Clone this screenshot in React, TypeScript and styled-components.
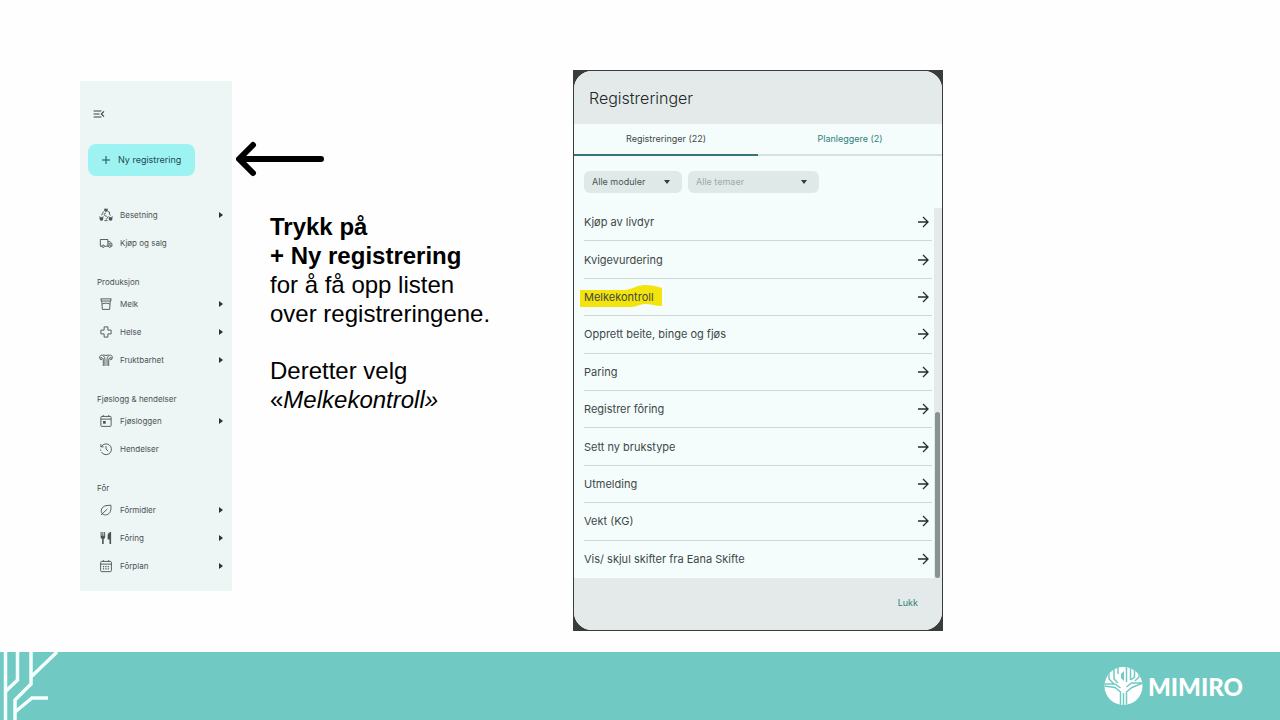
import React from "react";
import styled, { createGlobalStyle } from "styled-components";

const GlobalStyle = createGlobalStyle`
  *, *::before, *::after { box-sizing: border-box; }
  body { margin: 0; background: #fefefe; color: #000; }
  button, select { font: inherit; color: inherit; border: 0; background: none; padding: 0; margin: 0; }
  button { cursor: pointer; }
  svg { display: block; flex: none; }
`;

const Page = styled.div`
  min-height: 100vh;
  display: flex;
  flex-direction: column;
`;

const Slide = styled.main`
  flex: 1;
  display: grid;
  grid-template-columns: minmax(152px, 152fr) minmax(290px, 341fr) minmax(320px, 370fr) minmax(0, 257fr);
  align-items: start;
  padding: 70px 80px 20px;
`;

const Sidebar = styled.nav`
  margin-top: 11px;
  padding: 27px 8px 11px;
  background: #eef5f5;
  color: #4b5253;
  font: 8px/16px Inter, sans-serif;
`;

const MenuButton = styled.button`
  display: block;
  margin: 0 0 24px 5px;
  color: #3c4344;
`;

const NewButton = styled.button`
  display: flex;
  align-items: center;
  gap: 6px;
  min-width: 107px;
  height: 32px;
  padding: 0 12px;
  margin-bottom: 25px;
  border-radius: 8px;
  background: #9cf3f2;
  color: #1f4b4d;
  font-size: 9px;
  white-space: nowrap;
`;

const Group = styled.section`
  & + & { margin-top: 17px; }
`;

const GroupTitle = styled.h2`
  margin: 0;
  padding-left: 9px;
  font-size: 8px;
  font-weight: 400;
  line-height: 16px;
`;

const NavItem = styled.a`
  display: flex;
  align-items: center;
  gap: 7px;
  height: 28px;
  padding: 0 1px 0 11px;
  color: inherit;
  text-decoration: none;
`;

const NavLabel = styled.span`
  flex: 1;
`;

const Instructions = styled.section`
  display: flex;
  flex-direction: column;
  align-items: flex-start;
  padding: 70px 4px 0;
  font: 24px/29px "Liberation Sans", Arial, sans-serif;
`;

const Copy = styled.p`
  margin: 0 0 28px 34px;
  white-space: nowrap;
`;

const ArrowHolder = styled.div`
  margin-bottom: 35px;
`;

const Frame = styled.div`
  padding: 1px;
  background: #3a3c3c;
`;

const Dialog = styled.section`
  overflow: hidden;
  border-radius: 18px;
  background: #f4fdfc;
  color: #3f4747;
  font: 9px/16px Inter, sans-serif;
`;

const DialogHeader = styled.header`
  padding: 15px 15px 14px;
  background: #e3eae9;
`;

const DialogTitle = styled.h1`
  margin: 0;
  color: #222727;
  font-size: 16px;
  font-weight: 300;
  line-height: 24px;
`;

const Tabs = styled.div`
  display: grid;
  grid-template-columns: 1fr 1fr;
`;

const Tab = styled.button<{ $active?: boolean }>`
  height: 32px;
  border-bottom: ${(p) => (p.$active ? "2px solid #3b7474" : "2px solid #d8e1e0")};
  color: ${(p) => (p.$active ? "#3f4747" : "#2b8180")};
`;

const Filters = styled.div`
  display: flex;
  gap: 6px;
  padding: 15px 10px 11px;
`;

const Field = styled.label<{ $wide?: boolean }>`
  position: relative;
  width: ${(p) => (p.$wide ? "131px" : "98px")};

  svg {
    position: absolute;
    top: 9px;
    right: 12px;
    pointer-events: none;
  }
`;

const Picker = styled.select<{ $muted?: boolean }>`
  appearance: none;
  width: 100%;
  height: 22px;
  padding: 0 8px;
  border-radius: 6px;
  background: #dee9e8;
  color: ${(p) => (p.$muted ? "#9eaaaa" : "#4b5454")};
`;

const ScrollArea = styled.div`
  display: flex;
`;

const List = styled.ul`
  flex: 1;
  display: grid;
  grid-auto-rows: 1fr;
  min-height: 374px;
  margin: 0;
  padding: 0 0 0 10px;
  list-style: none;
  font-size: 11px;
`;

const ListItem = styled.li`
  display: flex;
  border-bottom: 1px solid #cfd8d7;

  &:last-child { border-bottom: 0; }
`;

const RowButton = styled.button`
  flex: 1;
  display: flex;
  align-items: center;
  justify-content: space-between;
  padding-right: 3px;
  text-align: left;
`;

const Label = styled.span`
  position: relative;
  z-index: 0;
`;

const Marker = styled.svg`
  position: absolute;
  z-index: -1;
  top: -4px;
  left: -4px;
`;

const ScrollTrack = styled.div`
  display: flex;
  align-items: flex-end;
  width: 8px;
  margin: 4px 0 0 2px;
  padding-left: 1px;
  background: #e3eae9;
`;

const ScrollThumb = styled.div`
  width: 5px;
  height: 45%;
  border-radius: 3px;
  background: #879291;
`;

const DialogFooter = styled.footer`
  display: flex;
  justify-content: flex-end;
  padding: 17px 24px 19px;
  background: #e3eae9;
  color: #2b8176;
`;

const Banner = styled.footer`
  display: flex;
  justify-content: space-between;
  height: 68px;
  background: #70c9c2;
`;

const Brand = styled.div`
  display: flex;
  align-items: center;
  gap: 5px;
  padding-right: 37px;
  color: #fff;
  font: 900 24px/29px Lato, sans-serif;
`;

const stroke = {
  fill: "none",
  stroke: "currentColor",
  strokeWidth: 1.7,
  strokeLinejoin: "round" as const,
};

const icons: Record<string, React.ReactNode> = {
  herd: (
    <g {...stroke}>
      <g fill="currentColor" stroke="none">
        <circle cx="12" cy="3" r="3" />
        <path d="M8 0l3 1-1 2zM16 0l-3 1 1 2z" />
        <circle cx="3.500" cy="19" r="3.500" />
        <path d="M-1 14.500l3.500 1-2 2zM8 14.500l-3.500 1 2 2z" />
        <circle cx="20.500" cy="19" r="3.500" />
        <path d="M16 14.500l3.500 1-2 2zM25 14.500l-3.500 1 2 2z" />
      </g>
      <path d="M8.500 5.500C6 7 4.500 9.500 4 12.500M15 5.500l3.500 1V10l1.500 3M9 22.500h6M12 8.500c-3 0-4.500 2-3 4s4.500 1 5.500 3-.5 4-3 4" />
    </g>
  ),
  truck: (
    <g {...stroke}>
      <path d="M4.500 18H1.500V5.500h14V18H9M15.500 9.500h4l3.500 4V18h-1.500M15.500 18h1" />
      <circle cx="6.700" cy="18" r="2.200" />
      <circle cx="19" cy="18" r="2.200" />
      <path d="M16 13.500h6" />
    </g>
  ),
  milk: <path {...stroke} d="M2 2.500h20M3 2.500v4h18v-4M4.200 6.500l1 15.500h13.600l1-15.500M5 12c4-2 10-2 14 0" />,
  health: <path {...stroke} d="M8.500 2.500h7v6h6v7h-6v6h-7v-6h-6v-7h6z" />,
  fertility: (
    <g {...stroke}>
      <path d="M10 23V10C9.500 6 7 3 4 3 1 3-.5 6 .5 9M14 23V10c.5-4 3-7 6-7 3 0 4.500 3 3.500 6M7 23V11c0-1.500-.5-2.500-1.500-3M17 23V11c0-1.500.5-2.500 1.500-3M7 2.500c2 0 3.500.5 5 1.500 1.500-1 3-1.500 5-1.500" />
      <circle cx="3" cy="9.500" r="2" />
      <circle cx="21" cy="9.500" r="2" />
    </g>
  ),
  day: (
    <g {...stroke}>
      <rect x="2.500" y="3.500" width="19" height="18.500" rx="1.500" />
      <path d="M2.500 8.500h19M7 1v3M17 1v3" />
      <path fill="currentColor" stroke="none" d="M6.500 12h5v5h-5z" />
    </g>
  ),
  history: (
    <g {...stroke}>
      <path d="M3.500 7.500A10 10 0 1 1 5 19.500" />
      <path strokeDasharray="2.500 2" d="M5 19.500A10 10 0 0 1 2 11" />
      <path d="M2.500 3v5H7.500M12 6.500V12l4 4" />
    </g>
  ),
  leaf: (
    <path {...stroke} d="M3 21L14.500 10M5 19C1 14 3.500 5.500 12 4c3-.5 6-.5 9-1 .5 4 .5 8-1 12-2.500 6-10 8-15 4z" />
  ),
  cutlery: (
    <path fill="currentColor" d="M2 1h1.800v7h1.500V1h1.800v7h1.500V1h1.800v9c0 2-1.200 3.300-2.700 3.800V23H4.800v-9.200C3.200 13.300 2 12 2 10zM21.500 1v22H18.500v-8H15V7.500c0-3.500 2.800-6.500 6.500-6.500z" />
  ),
  calendar: (
    <g {...stroke}>
      <rect x="2" y="3.500" width="20" height="19" rx="2" />
      <path d="M2 8.500h20M7 1v3M17 1v3" />
      <path strokeDasharray="2.200 2.200" strokeWidth={2.200} d="M6.300 13h12M6.300 17.500h12" />
    </g>
  ),
};

const Icon = ({ name }: { name: string }) => (
  <svg width="14" height="14" viewBox="-1 -1 26 26" overflow="visible" aria-hidden="true">
    {icons[name]}
  </svg>
);

const CaretRight = () => (
  <svg width="4" height="6" viewBox="0 0 4 6" aria-hidden="true">
    <path d="M0 0l4 3-4 3z" fill="#2c3233" />
  </svg>
);

const CaretDown = () => (
  <svg width="6" height="4" viewBox="0 0 6 4" aria-hidden="true">
    <path d="M0 0h6L3 4z" fill="#343c3c" />
  </svg>
);

const RowArrow = () => (
  <svg width="12" height="12" viewBox="0 0 12 12" aria-hidden="true">
    <path d="M1 6h10M6 1l5 5-5 5" fill="none" stroke="#262b2b" strokeWidth="1.300" />
  </svg>
);

type Entry = { icon: string; label: string; leaf?: boolean };

const groups: { title?: string; items: Entry[] }[] = [
  {
    items: [
      { icon: "herd", label: "Besetning" },
      { icon: "truck", label: "Kjøp og salg", leaf: true },
    ],
  },
  {
    title: "Produksjon",
    items: [
      { icon: "milk", label: "Melk" },
      { icon: "health", label: "Helse" },
      { icon: "fertility", label: "Fruktbarhet" },
    ],
  },
  {
    title: "Fjøslogg & hendelser",
    items: [
      { icon: "day", label: "Fjøsloggen" },
      { icon: "history", label: "Hendelser", leaf: true },
    ],
  },
  {
    title: "Fôr",
    items: [
      { icon: "leaf", label: "Fôrmidler" },
      { icon: "cutlery", label: "Fôring" },
      { icon: "calendar", label: "Fôrplan" },
    ],
  },
];

const registrations = [
  "Kjøp av livdyr",
  "Kvigevurdering",
  "Melkekontroll",
  "Opprett beite, binge og fjøs",
  "Paring",
  "Registrer fôring",
  "Sett ny brukstype",
  "Utmelding",
  "Vekt (KG)",
  "Vis/ skjul skifter fra Eana Skifte",
];

export default function App() {
  return (
    <Page>
      <GlobalStyle />
      <Slide>
        <Sidebar aria-label="Hovedmeny">
          <MenuButton aria-label="Meny">
            <svg width="12" height="12" viewBox="2 2 20 20" fill="currentColor" aria-hidden="true">
              <path d="M3 18h13v-2H3v2zm0-5h10v-2H3v2zm0-7v2h13V6H3zm18 9.590L17.420 12 21 8.410 19.590 7l-5 5 5 5L21 15.590z" />
            </svg>
          </MenuButton>
          <NewButton>
            <svg width="12" height="12" viewBox="0 0 12 12" aria-hidden="true">
              <path d="M6 2v8M2 6h8" stroke="currentColor" />
            </svg>
            Ny registrering
          </NewButton>
          {groups.map((group, i) => (
            <Group key={i}>
              {group.title && <GroupTitle>{group.title}</GroupTitle>}
              {group.items.map((item) => (
                <NavItem href="#" key={item.label}>
                  <Icon name={item.icon} />
                  <NavLabel>{item.label}</NavLabel>
                  {!item.leaf && <CaretRight />}
                </NavItem>
              ))}
            </Group>
          ))}
        </Sidebar>

        <Instructions>
          <ArrowHolder>
            <svg width="88" height="37" viewBox="0 0 88 37" aria-hidden="true">
              <path
                d="M85 19H4M17 5L3 19l14 14"
                fill="none"
                stroke="#000"
                strokeWidth="6"
                strokeLinecap="round"
                strokeLinejoin="round"
              />
            </svg>
          </ArrowHolder>
          <Copy>
            <b>Trykk på</b>
            <br />
            <b>+ Ny registrering</b>
            <br />
            for å få opp listen
            <br />
            over registreringene.
          </Copy>
          <Copy>
            Deretter velg
            <br />
            «<i>Melkekontroll»</i>
          </Copy>
        </Instructions>

        <Frame>
          <Dialog aria-label="Registreringer">
            <DialogHeader>
              <DialogTitle>Registreringer</DialogTitle>
            </DialogHeader>
            <Tabs role="tablist">
              <Tab role="tab" aria-selected="true" $active>
                Registreringer (22)
              </Tab>
              <Tab role="tab" aria-selected="false">
                Planleggere (2)
              </Tab>
            </Tabs>
            <Filters>
              <Field>
                <Picker aria-label="Modul">
                  <option>Alle moduler</option>
                </Picker>
                <CaretDown />
              </Field>
              <Field $wide>
                <Picker aria-label="Tema" $muted>
                  <option>Alle temaer</option>
                </Picker>
                <CaretDown />
              </Field>
            </Filters>
            <ScrollArea>
              <List>
                {registrations.map((name) => (
                  <ListItem key={name}>
                    <RowButton>
                      <Label>
                        {name === "Melkekontroll" && (
                          <Marker width="82" height="24" viewBox="0 0 82 24" aria-hidden="true">
                            <path
                              d="M0 5h45c8-1 12-5 20-5 6 0 11 1 17 3v18c-6 0-11-2-17-2-5 0-8 3-14 3H0z"
                              fill="#f2e40c"
                            />
                          </Marker>
                        )}
                        {name}
                      </Label>
                      <RowArrow />
                    </RowButton>
                  </ListItem>
                ))}
              </List>
              <ScrollTrack>
                <ScrollThumb />
              </ScrollTrack>
            </ScrollArea>
            <DialogFooter>
              <button>Lukk</button>
            </DialogFooter>
          </Dialog>
        </Frame>
      </Slide>

      <Banner>
        <svg width="60" height="68" viewBox="0 0 60 68" aria-hidden="true">
          <path
            d="M5.500 0v68M17.500 0v28L6 39M31 0v32L15 48v20M57 0L31 25M15 60l17-14h16"
            fill="none"
            stroke="#f4fffd"
            strokeWidth="3.500"
          />
        </svg>
        <Brand>
          <svg width="39" height="38" viewBox="0 0 39 38" aria-hidden="true">
            <clipPath id="disc">
              <circle cx="19.500" cy="19" r="19" />
            </clipPath>
            <g clipPath="url(#disc)">
              <path fill="#fff" d="M0 0h39v38H0z" />
              <path
                d="M16.500 38V25L11 20.500 0 19M22.500 38V25L28 20.500 39 16M16.500 21L11 17H0M10 17L5 12V5M14 16l-4-4V2M14 7V0M19.500 38V26M22.500 20l5-4h12M22.500 15V0M26.500 13V0M26.500 13l4-3V2M31 14l4-4V4"
                fill="none"
                stroke="#70c9c2"
                strokeWidth="1.500"
              />
              <path d="M17 7l3-3v10l-3-3z" fill="#70c9c2" />
            </g>
          </svg>
          MIMIRO
        </Brand>
      </Banner>
    </Page>
  );
}
